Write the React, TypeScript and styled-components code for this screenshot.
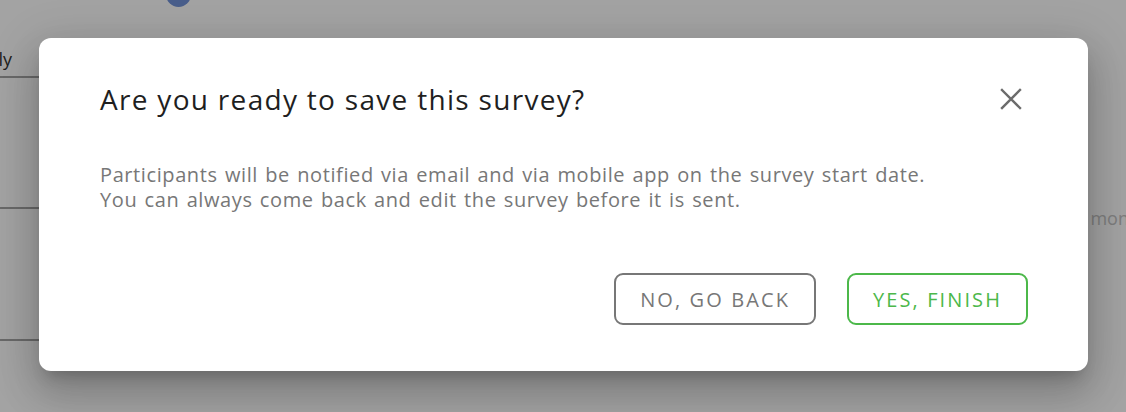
import React from "react";
import styled, { createGlobalStyle } from "styled-components";

const Global = createGlobalStyle`
  html, body { margin: 0; padding: 0; }
  body {
    width: 1126px;
    height: 412px;
    overflow: hidden;
    background: #ffffff;
    font-family: "Open Sans", "Noto Sans", sans-serif;
  }
  #root { height: 412px; }
`;

const Page = styled.div`
  position: relative;
  width: 1126px;
  height: 412px;
  overflow: hidden;
  background: #ffffff;
`;

const Header = styled.div`
  height: 0;
  display: flex;
  padding-left: 166px;
`;

const Avatar = styled.div`
  width: 25px;
  height: 25px;
  border-radius: 50%;
  background: #7393d9;
  margin-top: -18px;
`;

const Content = styled.div`
  display: flex;
  justify-content: space-between;
  padding-top: 46px;
`;

const Table = styled.div`
  width: 500px;
  display: flex;
  flex-direction: column;
`;

const Row = styled.div<{ $h: number }>`
  height: ${(p) => p.$h}px;
  display: flex;
  align-items: center;
  border-bottom: 2px solid #a5a5a5;
  box-sizing: border-box;
`;

const ClipCell = styled.div`
  width: 12px;
  display: flex;
  justify-content: flex-end;
  white-space: nowrap;
  font-family: "Open Sans", sans-serif;
  font-size: 18px;
  color: #333;
  margin-top: -4px;
`;

const Side = styled.div`
  width: 40px;
  overflow: hidden;
  padding-top: 161px;
  display: flex;
  justify-content: flex-end;
`;

const SideText = styled.div`
  font-family: "Open Sans", sans-serif;
  font-size: 18px;
  line-height: 22px;
  color: #c4c4c4;
  white-space: nowrap;
  margin-right: -34px;
`;

const Overlay = styled.div`
  position: absolute;
  inset: 0;
  background: rgba(0, 0, 0, 0.36);
  display: flex;
  justify-content: center;
  align-items: flex-start;
  padding-top: 38px;
`;

const Dialog = styled.div`
  width: 1049px;
  height: 333px;
  box-sizing: border-box;
  margin-left: 1px;
  background: #ffffff;
  border-radius: 12px;
  padding: 39px 60px 46px 61px;
  display: flex;
  flex-direction: column;
  box-shadow: 0 11px 15px -7px rgba(0, 0, 0, 0.2),
    0 24px 38px 3px rgba(0, 0, 0, 0.14), 0 9px 46px 8px rgba(0, 0, 0, 0.12);
`;

const TitleRow = styled.div`
  display: flex;
  justify-content: space-between;
  align-items: center;
`;

const Title = styled.h2`
  margin: 0;
  font-family: "Open Sans", sans-serif;
  font-weight: 400;
  font-size: 28px;
  letter-spacing: 1.3px;
  line-height: 44px;
  color: #1f1f1f;
`;

const CloseButton = styled.button`
  border: none;
  background: none;
  padding: 0;
  width: 24px;
  height: 24px;
  margin-right: 5px;
  display: flex;
  align-items: center;
  justify-content: center;
  cursor: pointer;
`;

const Body = styled.p`
  margin: 41px 0 0;
  font-family: "Open Sans", sans-serif;
  font-size: 20px;
  letter-spacing: 0.6px;
  word-spacing: 1.5px;
  line-height: 25px;
  color: #777777;
`;

const Footer = styled.div`
  margin-top: auto;
  display: flex;
  justify-content: flex-end;
  gap: 31px;
`;

const Button = styled.button<{ $tone: "neutral" | "success" }>`
  height: 52px;
  box-sizing: border-box;
  padding: 0 24px;
  border-radius: 9px;
  background: #ffffff;
  border: 2px solid ${(p) => (p.$tone === "success" ? "#4cb84a" : "#777777")};
  color: ${(p) => (p.$tone === "success" ? "#4cb84a" : "#777777")};
  font-family: "Open Sans", sans-serif;
  font-size: 20px;
  letter-spacing: 2.1px;
  text-transform: uppercase;
  cursor: pointer;
`;

export default function App() {
  return (
    <>
      <Global />
      <Page>
        <Header>
          <Avatar />
        </Header>
        <Content>
          <Table>
            <Row $h={32}>
              <ClipCell>Weekly</ClipCell>
            </Row>
            <Row $h={131} />
            <Row $h={132} />
          </Table>
          <Side>
            <SideText>monthly</SideText>
          </Side>
        </Content>
        <Overlay>
          <Dialog role="dialog" aria-modal="true">
            <TitleRow>
              <Title>Are you ready to save this survey?</Title>
              <CloseButton aria-label="Close">
                <svg width="22" height="22" viewBox="0 0 22 22">
                  <path
                    d="M2 2 L20 20 M20 2 L2 20"
                    stroke="#6b6b6b"
                    strokeWidth="2.4"
                    strokeLinecap="square"
                  />
                </svg>
              </CloseButton>
            </TitleRow>
            <Body>
              Participants will be notified via email and via mobile app on the survey start date.
              <br />
              You can always come back and edit the survey before it is sent.
            </Body>
            <Footer>
              <Button $tone="neutral">No, go back</Button>
              <Button $tone="success">Yes, finish</Button>
            </Footer>
          </Dialog>
        </Overlay>
      </Page>
    </>
  );
}
